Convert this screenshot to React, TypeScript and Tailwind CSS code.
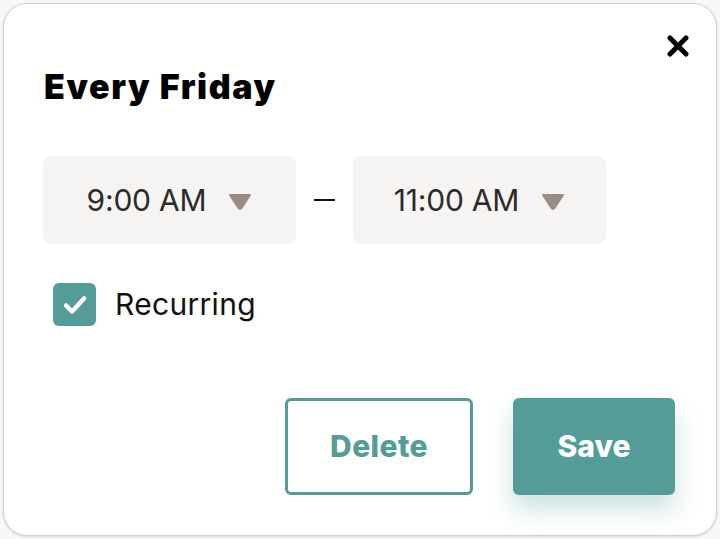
function TimeSelect({ value }: { value: string }) {
  return (
    <button className="flex h-[88px] w-[253px] items-center justify-center gap-[22px] rounded-lg bg-[#f5f4f2] text-[30px] tracking-[-0.2px] text-[#2b2b2b]">
      <span>{value}</span>
      <svg width="24" height="17" viewBox="0 0 24 17" className="mt-0.5">
        <path d="M2 2 H22 L13.5 15 Q12 17 10.5 15 Z" fill="#9b8c84" stroke="#9b8c84" strokeWidth="2" strokeLinejoin="round" />
      </svg>
    </button>
  )
}

export default function App() {
  return (
    <div className="h-[539px] w-[720px] bg-[#f7f8f8] p-[3px] font-['Inter',sans-serif]">
      <div className="relative flex h-[533px] flex-col rounded-[24px] border border-[#cfcfcf] bg-white px-[39px] shadow-sm">
        {/* Close */}
        <button className="absolute right-[27px] top-[31px]" aria-label="Close">
          <svg width="22" height="22" viewBox="0 0 22 22">
            <path d="M3 3 L19 19 M19 3 L3 19" stroke="#000" strokeWidth="5" strokeLinecap="round" />
          </svg>
        </button>

        <h1 className="ml-[1px] mt-[66px] text-[34px] font-black leading-none tracking-[1.6px] text-black">
          Every Friday
        </h1>

        <div className="mt-[52px] flex items-center">
          <TimeSelect value="9:00 AM" />
          <div className="mx-[18px] h-[2px] w-[21px] bg-[#111]" />
          <TimeSelect value="11:00 AM" />
        </div>

        <label className="ml-[10px] mt-[38px] flex items-center gap-[19px] text-[30px] tracking-[0.3px] text-[#111]">
          <span className="flex h-[43px] w-[43px] items-center justify-center rounded-md bg-[#559b98]">
            <svg width="26" height="22" viewBox="0 0 26 22">
              <path d="M4 11.5 L10 17.5 L22 4.5" stroke="#fff" strokeWidth="4.5" fill="none" strokeLinecap="round" strokeLinejoin="round" />
            </svg>
          </span>
          Recurring
        </label>

        <div className="mt-auto mb-[40px] flex justify-end gap-[40px] pr-[2px]">
          <button className="h-[97px] w-[188px] rounded-md border-[3px] border-[#559b98] text-[30px] font-extrabold tracking-[0.4px] text-[#559b98]">
            Delete
          </button>
          <button className="h-[97px] w-[162px] rounded-md bg-[#559b98] text-[30px] font-extrabold text-white shadow-[0_14px_24px_rgba(85,155,152,0.3)]">
            Save
          </button>
        </div>
      </div>
    </div>
  )
}
